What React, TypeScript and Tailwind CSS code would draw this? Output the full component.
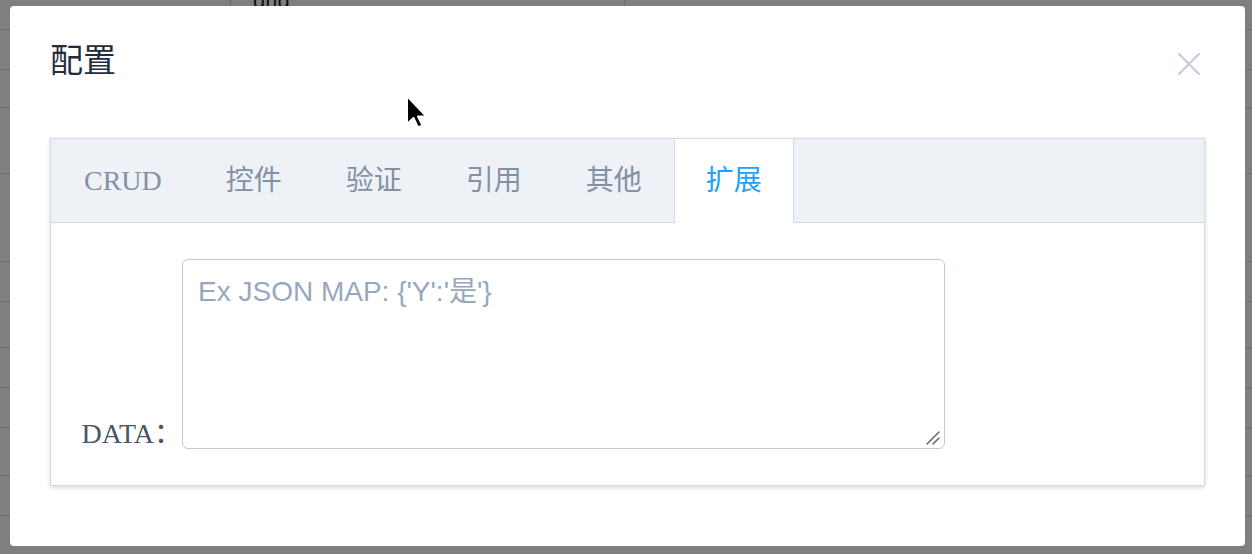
import React from 'react';

const tabs = ['CRUD', '控件', '验证', '引用', '其他', '扩展'];
const serif = "font-['Liberation_Serif','Noto_Sans_CJK_SC',serif]";

function CloseIcon() {
  return (
    <svg width="22" height="22" viewBox="0 0 22 22" className="mt-[8px] mr-[5px] shrink-0" aria-hidden="true">
      <path d="M1 1L21 21M21 1L1 21" stroke="#bfcbd9" strokeWidth="2" strokeLinecap="round" />
    </svg>
  );
}

function Cursor() {
  return (
    <svg width="26" height="38" viewBox="0 0 26 38" className="absolute left-[404px] top-[93px]" aria-hidden="true">
      <path d="M3 3L3 31L9.5 25L14 34.5L18.5 32.5L14 23.5L22.5 23.5Z" fill="#000" stroke="#fff" strokeWidth="2" strokeLinejoin="round" />
    </svg>
  );
}

// dimmed page behind the dialog, only the bits that peek out
function Backdrop() {
  const rows = [22, 40, 38, 66, 88, 40, 46, 40, 40, 48, 40, 46, 40];
  return (
    <div className="flex flex-col">
      <div className="flex h-[8px]">
        <div className="ml-[230px] w-[395px] border-x border-[#6a6a6a] relative overflow-hidden">
          <span className="absolute left-[22px] -top-[16px] text-[22px] font-['Liberation_Sans',sans-serif] text-[#111]">grid</span>
        </div>
      </div>
      {rows.map((h, i) => (
        <div key={i} style={{ height: h }} className="border-b border-[#6c6c6c]" />
      ))}
    </div>
  );
}

export default function App() {
  return (
    <div className="relative h-[554px] w-full overflow-hidden bg-[#7f7f7f]">
      <Backdrop />

      {/* Dialog overlay */}
      <div className="absolute inset-0 pl-[10px] pt-[6px]">
        <div className="flex h-[540px] w-[1235px] flex-col rounded-[4px] bg-white">
          {/* Header */}
          <div className="flex items-start justify-between px-10 pt-[39px]">
            <h2 className={`${serif} text-[33px] leading-[33px] font-normal text-[#1f2d3d]`}>配置</h2>
            <CloseIcon />
          </div>

          {/* Body */}
          <div className="px-10 pt-[60px]">
            <div className="border border-[#d1dbe5] bg-white shadow-[0_2px_4px_0_rgba(0,0,0,0.12),0_0_6px_0_rgba(0,0,0,0.04)]">
              <div className="flex h-[84px] border-b border-[#d1dbe5] bg-[#eef1f6]">
                {tabs.map((t, i) => {
                  const active = i === tabs.length - 1;
                  return (
                    <div
                      key={t}
                      className={`${serif} h-[84px] shrink-0 text-[28px] leading-[83px] ${
                        active
                          ? 'border-x border-[#d1dbe5] bg-white px-[31px] text-[#20a0ff]'
                          : i === 0
                          ? 'pl-[33px] pr-[32px] text-[#8391a5]'
                          : 'px-8 text-[#8391a5]'
                      }`}>
                      {t}
                    </div>
                  );
                })}
              </div>

              <div className="flex items-end pt-[36px] pb-[36px]">
                <label className={`${serif} w-[131px] shrink-0 pb-px text-right text-[28px] leading-[28px] text-[#48576a]`}>
                  DATA<span className="font-['Noto_Sans_CJK_SC',sans-serif]">：</span>
                </label>
                <div className="relative">
                  <textarea
                    placeholder="Ex JSON MAP: {'Y':'是'}"
                    className="block h-[190px] w-[763px] resize-none rounded-[6px] border border-[#bfcbd9] bg-white px-[15px] pt-[11px] font-['Liberation_Sans','Noto_Sans_CJK_SC',sans-serif] text-[28px] leading-[42px] text-[#1f2d3d] outline-none placeholder:text-[#97a8be]"
                  />
                  {/* resize grip */}
                  <svg width="16" height="16" viewBox="0 0 16 16" className="pointer-events-none absolute right-[4px] bottom-[3px]" aria-hidden="true">
                    <path d="M2 14L14 2M8 14L14 8" stroke="#6b6b6b" strokeWidth="1.6" strokeLinecap="round" />
                  </svg>
                </div>
              </div>
            </div>
          </div>
        </div>
      </div>

      <Cursor />
    </div>
  );
}
